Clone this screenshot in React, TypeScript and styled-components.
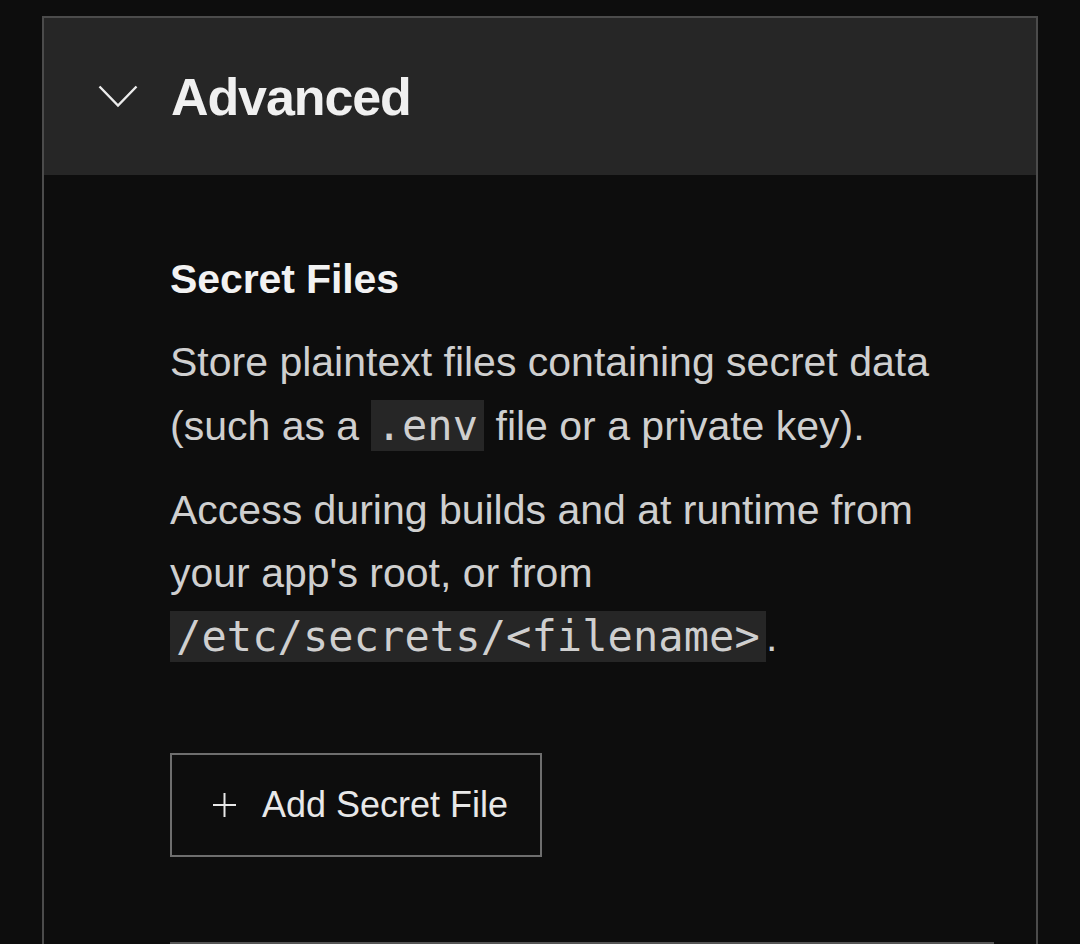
import React from "react";
import styled, { createGlobalStyle } from "styled-components";

const GlobalStyle = createGlobalStyle`
  html, body {
    margin: 0;
    padding: 0;
    background: #0d0d0d;
  }
  body {
    font-family: "Liberation Sans", Arial, sans-serif;
    color: #d0d0d0;
  }
`;

const Page = styled.div`
  padding: 16px 42px 0 42px;
  min-height: 944px;
  box-sizing: border-box;
`;

const Panel = styled.section`
  border: 2px solid #4b4b4b;
  border-bottom: none;
  background: #0d0d0d;
`;

const Header = styled.header`
  display: flex;
  align-items: center;
  gap: 33px;
  height: 157px;
  padding-left: 54px;
  background: #262626;
`;

const Title = styled.h2`
  margin: 0;
  font-size: 52px;
  line-height: 60px;
  font-weight: 700;
  letter-spacing: -1.1px;
  color: #f0f0f0;
`;

const Body = styled.div`
  padding: 80px 42px 60px 126px;
`;

const SectionTitle = styled.h3`
  margin: 0 0 28px 0;
  font-size: 41px;
  line-height: 48px;
  font-weight: 700;
  letter-spacing: -0.1px;
  color: #f2f2f2;
`;

const Paragraph = styled.p`
  margin: 0 0 21px 0;
  font-size: 41px;
  line-height: 63px;
  color: #cfcfcf;
`;

const Code = styled.code`
  font-family: "DejaVu Sans Mono", "Liberation Mono", monospace;
  font-size: 42px;
  letter-spacing: 0.1px;
  padding: 1px 6px;
  background: #262626;
  color: #cfcfcf;
`;

const AddButton = styled.button`
  display: inline-flex;
  align-items: center;
  gap: 26px;
  margin-top: 63px;
  padding: 30px 32px 30px 41px;
  background: transparent;
  border: 2px solid #6e6e6e;
  color: #e8e8e8;
  font-family: "Liberation Sans", Arial, sans-serif;
  font-size: 36px;
  line-height: 40px;
  cursor: pointer;
`;

const Divider = styled.hr`
  margin: 85px 0 0 0;
  border: none;
  height: 2px;
  background: #555555;
`;

const Chevron = () => (
  <svg width="40" height="23" viewBox="0 0 40 23" fill="none">
    <polyline
      points="1.5,1.5 20,20.5 38.5,1.5"
      stroke="#ececec"
      strokeWidth="2.4"
      fill="none"
    />
  </svg>
);

const PlusIcon = () => (
  <svg width="23" height="24" viewBox="0 0 23 24" fill="none">
    <line x1="11.5" y1="0" x2="11.5" y2="24" stroke="#e8e8e8" strokeWidth="2" />
    <line x1="0" y1="12" x2="23" y2="12" stroke="#e8e8e8" strokeWidth="2" />
  </svg>
);

export default function App() {
  return (
    <>
      <GlobalStyle />
      <Page>
        <Panel>
          <Header>
            <Chevron />
            <Title>Advanced</Title>
          </Header>
          <Body>
            <SectionTitle>Secret Files</SectionTitle>
            <Paragraph>
              Store plaintext files containing secret data (such as a <Code>.env</Code> file
              or a private key).
            </Paragraph>
            <Paragraph>
              Access during builds and at runtime from your app's root, or from{" "}
              <Code>/etc/secrets/&lt;filename&gt;</Code>.
            </Paragraph>
            <AddButton type="button">
              <PlusIcon />
              <span>Add Secret File</span>
            </AddButton>
            <Divider />
          </Body>
        </Panel>
      </Page>
    </>
  );
}
